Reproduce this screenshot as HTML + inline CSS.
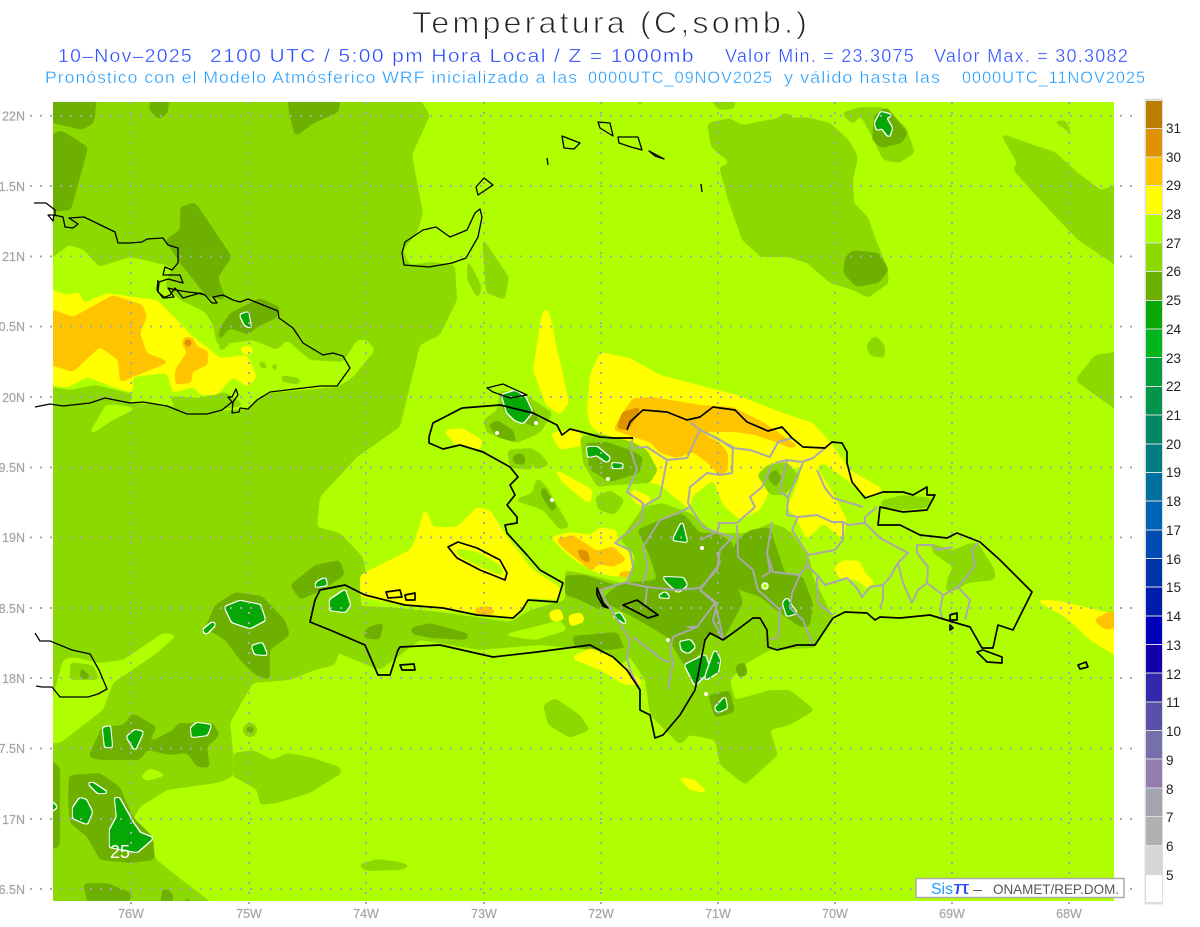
<!DOCTYPE html>
<html><head><meta charset="utf-8"><title>Temperatura</title>
<style>
html,body{margin:0;padding:0;background:#fff;width:1200px;height:927px;overflow:hidden}
svg{display:block}
text{font-family:"Liberation Sans",sans-serif;white-space:pre}
.a{fill:#8cd900}.l{fill:#b0ff00}.d{fill:#6eb000}
.y{fill:#ffff00}.o{fill:#ffc400}.r{fill:#de9200}
.a,.l,.d,.y,.o,.r{filter:url(#goo)}
.g{fill:#000;filter:url(#gw)}
.ax{fill:#a4a4a4;font-size:12.5px;stroke:#a4a4a4;stroke-width:.2}
.cb{fill:#222;font-size:13.5px}
</style></head><body>
<svg width="1200" height="927" viewBox="0 0 1200 927" xmlns="http://www.w3.org/2000/svg">
<defs>
<clipPath id="m"><rect x="53" y="102" width="1061" height="799"/></clipPath>
<filter id="goo" color-interpolation-filters="sRGB"><feGaussianBlur stdDeviation="2.5"/><feComponentTransfer><feFuncA type="linear" slope="8" intercept="-3.5"/></feComponentTransfer></filter>
<filter id="gw" x="-40%" y="-40%" width="180%" height="180%" color-interpolation-filters="sRGB">
<feGaussianBlur in="SourceAlpha" stdDeviation="1"/>
<feComponentTransfer result="s"><feFuncA type="linear" slope="6" intercept="-2.2"/></feComponentTransfer>
<feMorphology in="s" operator="dilate" radius="1" result="b"/>
<feFlood flood-color="#ffffff"/><feComposite in2="b" operator="in" result="w"/>
<feFlood flood-color="#06a806"/><feComposite in2="s" operator="in" result="g"/>
<feMerge><feMergeNode in="w"/><feMergeNode in="g"/></feMerge>
</filter>
</defs>
<rect width="1200" height="927" fill="#fff"/>
<g stroke="#fff">
<text x="412" y="33" font-size="31" fill="#222" stroke-width=".9" letter-spacing="3" textLength="398" lengthAdjust="spacingAndGlyphs">Temperatura (C,somb.)</text>
<g font-size="18" fill="#2a4cff" stroke-width=".35" letter-spacing="1.2">
<text x="58" y="62" textLength="135" lengthAdjust="spacingAndGlyphs">10–Nov–2025</text>
<text x="210" y="62" textLength="485" lengthAdjust="spacingAndGlyphs">2100 UTC / 5:00 pm Hora Local / Z = 1000mb</text>
<text x="725" y="62" textLength="190" lengthAdjust="spacingAndGlyphs">Valor Min. = 23.3075</text>
<text x="934" y="62" textLength="195" lengthAdjust="spacingAndGlyphs">Valor Max. = 30.3082</text>
</g>
<g font-size="17" fill="#1e9cff" stroke-width=".35" letter-spacing="1">
<text x="45" y="83" textLength="533" lengthAdjust="spacingAndGlyphs">Pronóstico con el Modelo Atmósferico WRF inicializado a las</text>
<text x="588" y="83" textLength="185" lengthAdjust="spacingAndGlyphs">0000UTC_09NOV2025</text>
<text x="784" y="83" textLength="157" lengthAdjust="spacingAndGlyphs">y válido hasta las</text>
<text x="962" y="83" textLength="184" lengthAdjust="spacingAndGlyphs">0000UTC_11NOV2025</text>
</g>
</g>

<g clip-path="url(#m)">
<rect x="53" y="102" width="1061" height="799" fill="#b0ff00"/>
<!-- 26 layer -->
<polygon class="a" points="40,90 414,90 430,115 412,155 423,213 417,233 403,250 410,265 430,262 455,265 457,300 440,335 420,345 400,427 357,457 320,497 317,527 340,533 363,557 367,580 360,600 370,625 340,650 335,665 315,670 290,680 253,683 230,723 233,750 233,777 217,783 167,790 140,807 133,820 157,860 173,873 228,915 40,915"/>
<polygon class="a" points="707,123 730,118 742,125 778,118 786,112 793,118 807,117 830,123 849,140 858,157 853,180 854,203 868,217 876,240 887,267 889,283 868,298 853,290 830,283 807,263 788,257 761,257 742,240 728,200 719,167 730,163 711,147"/>
<polygon class="a" points="841,113 860,107 883,107 906,127 915,153 899,163 883,160 870,133 860,115 853,125"/>
<polygon class="a" points="1000,133 1025,142 1055,152 1078,173 1101,190 1130,180 1130,275 1078,240 1052,213 1013,170 1017,163"/>
<polygon class="a" points="1052,121 1065,120 1078,143 1066,130"/>
<polygon class="a" points="1075,380 1095,355 1130,350 1130,420 1095,395"/>
<polygon class="a" points="866,345 875,335 885,345 885,358 870,356"/>
<polygon class="a" points="705,90 738,90 734,109 718,110"/>
<polygon class="a" points="627,90 653,90 640,106"/>
<polygon class="a" points="482,237 509,277 505,300 486,293"/>
<polygon class="a" points="467,257 482,287 478,300 467,280"/>
<polygon class="a" points="233,753 253,750 273,760 287,753 310,757 340,767 342,773 310,793 277,803 260,805 257,790 240,780 233,777"/>
<polygon class="a" points="357,865 377,859 400,862 412,866 400,870 367,871"/>
<polygon class="a" points="543,705 555,698 580,715 590,730 570,738 548,725"/>
<circle cx="250" cy="730" r="7" fill="#8cd900"/><circle cx="250" cy="730" r="3.5" fill="#6eb000"/>
<!-- lime patches in 26 -->
<polygon class="l" points="40,267 69,245 84,250 99,267 130,257 145,260 172,267 165,285 180,300 205,312 213,325 217,345 253,340 277,350 287,340 310,360 343,362 357,340 367,340 375,350 353,377 337,387 270,393 257,400 248,409 200,412 167,405 133,403 107,398 40,385"/>
<polygon class="l" points="87,437 107,403 137,408 113,420"/>
<polygon class="l" points="40,743 63,660 73,657 100,663 123,660 163,633 177,635 157,653 113,683 103,710 60,743"/>
<polygon class="l" points="140,777 150,768 168,775 147,781"/>
<polygon class="a" points="70,662 93,665 100,680 70,680"/>
<polygon class="d" points="80,666 92,678 80,680"/>
<!-- Cuba 26 lumps -->
<polygon class="a" points="40,385 70,390 95,385 133,394 130,404 40,408"/>
<polygon class="a" points="170,396 200,398 225,392 245,405 200,414 175,410"/>
<polygon class="a" points="258,360 265,362 268,370 260,368"/>
<polygon class="a" points="272,362 278,365 276,372 272,370"/>
<polygon class="a" points="280,375 300,378 300,385 282,382"/>
<polygon class="a" points="308,335 314,345 312,358 308,350"/>
<polygon class="a" points="275,320 290,330 300,345 280,340"/>
<polygon class="a" points="217,345 235,335 230,343 222,352"/>
<!-- Cuba yellow/orange -->
<polygon class="y" points="40,285 67,295 80,292 83,303 107,293 133,297 157,300 177,320 193,337 207,347 220,358 247,355 257,377 247,387 233,377 217,395 200,395 193,387 173,393 167,373 133,377 133,393 113,387 87,377 67,388 40,383"/>
<polygon class="o" points="40,305 73,317 113,295 143,305 147,317 140,333 147,353 170,362 133,377 120,383 118,360 100,347 73,372 40,362"/>
<polygon class="o" points="183,337 193,337 197,347 208,350 208,365 192,372 192,383 175,385 175,370 187,352 182,345"/>
<circle cx="188" cy="343" r="3.5" fill="#de9200"/>
<polygon class="y" points="241,346 251,346 254,352 247,356 241,352"/>
<!-- dark 25 west -->
<polygon class="d" points="40,90 98,90 94,123 82,130 40,120"/>
<polygon class="d" points="40,140 61,130 88,147 82,170 71,210 40,213"/>
<polygon class="d" points="151,90 170,90 168,113 159,120 149,110"/>
<polygon class="d" points="287,90 341,90 339,112 314,123 295,137 289,113"/>
<polygon class="d" points="180,207 195,202 212,227 232,257 218,277 226,300 207,297 180,263 165,240 180,230"/>
<polygon class="d" points="230,313 260,298 280,307 277,318 257,327 248,335 230,328 217,343 220,328"/>
<polygon class="d" points="205,628 215,605 235,592 262,596 285,620 290,635 270,650 270,680 255,675 240,660 225,640"/>
<polygon class="d" points="88,757 102,727 123,725 133,713 157,727 148,743 173,730 178,723 213,723 220,735 207,747 210,768 197,767 187,753 170,755 147,750 140,760 100,760"/>
<polygon class="d" points="69,775 100,773 120,787 133,817 153,837 155,860 130,863 100,860 87,837 70,823 68,800"/>
<polygon class="d" points="83,883 107,883 132,893 125,915 90,915"/>
<polygon class="d" points="158,915 163,887 173,893 173,915"/>
<polygon class="d" points="180,915 187,895 197,915"/>
<polygon class="d" points="40,753 60,767 60,847 40,852"/>
<polygon class="d" points="290,585 315,565 340,560 345,575 322,590 300,600"/>
<!-- east dark -->
<polygon class="d" points="845,257 853,250 879,253 889,270 879,283 856,287 843,273"/>
<polygon class="d" points="874,115 887,107 908,133 902,143 881,148 872,140"/>
<!-- Gulf yellow -->
<polygon class="y" points="360,575 410,550 415,540 425,507 433,527 457,527 477,507 490,510 507,537 533,570 560,587 560,600 530,598 523,610 513,618 470,612 443,610 405,605 360,597"/>
<polygon class="l" points="455,548 478,552 500,565 505,577 480,567 458,556"/>
<polygon class="o" points="473,608 490,606 497,614 478,616"/>
<!-- Peninsula 26 -->
<polygon class="a" points="310,625 345,605 400,608 440,612 510,622 530,610 565,600 565,570 590,575 630,585 640,600 640,650 620,665 590,650 540,645 480,650 420,640 380,670 330,650"/>
<polygon class="d" points="410,628 430,623 470,634 466,640 430,638 412,634"/>
<polygon class="d" points="572,636 615,632 636,646 610,650 575,648"/>
<polygon class="d" points="366,628 384,622 380,640 363,638"/>
<polygon class="d" points="565,575 585,575 615,585 630,600 600,610 580,600 565,595"/>
<polygon class="l" points="500,635 530,628 560,620 568,630 535,640"/>
<!-- Haiti yellow patches -->
<polygon class="y" points="443,430 462,428 483,440 480,450 455,445"/>
<polygon class="y" points="550,433 578,428 585,445 560,450"/>
<polygon class="y" points="547,460 557,470 593,490 590,505 580,497 563,483"/>
<polygon class="a" points="507,450 530,448 533,470 510,468"/>
<polygon class="d" points="512,455 524,453 526,465 514,464"/>
<polygon class="a" points="595,497 610,490 625,500 615,515 598,510"/>
<!-- North DR yellow -->
<polygon class="y" points="533,370 541,318 546,306 551,318 556,345 562,370 569,403 560,415 546,405"/>
<polygon class="y" points="587,410 590,375 600,352 630,358 660,375 737,395 783,413 813,423 830,442 850,470 885,490 867,497 847,480 823,463 817,467 833,493 847,520 843,540 823,523 807,540 797,520 787,507 795,490 803,465 790,470 770,490 760,510 740,520 723,505 713,480 692,497 690,510 660,485 640,480 630,470 627,448 620,440 600,435 590,425"/>
<polygon class="y" points="630,488 653,498 643,507 633,502"/>
<polygon class="o" points="613,430 623,412 633,398 653,397 700,405 733,407 763,422 800,447 790,448 775,442 755,435 735,432 700,432 720,443 728,453 728,470 720,477 710,465 693,452 677,458 660,453 650,442 633,437"/>
<polygon class="r" points="616,429 622,412 642,406 634,421 628,430"/>
<!-- Haiti north 26/25 -->
<polygon class="a" points="500,390 523,393 553,413 540,433 517,443 487,433 483,420 497,410"/>
<polygon class="d" points="488,425 497,420 513,430 517,443 497,437"/>
<polygon class="d" points="502,393 527,397 540,423 533,427 520,420 503,410"/>
<polygon class="a" points="580,437 597,433 633,442 647,450 658,470 650,483 617,485 597,487 583,463"/>
<polygon class="d" points="585,443 607,442 630,450 643,457 640,473 610,482 590,470"/>
<polygon class="a" points="537,477 547,487 560,510 570,527 560,530 543,510 513,500 532,493"/>
<polygon class="d" points="543,485 557,507 552,513 540,493"/>
<polygon class="a" points="525,445 540,453 550,465 535,470"/>
<!-- Haiti yellow orange -->
<polygon class="y" points="550,537 570,532 590,535 600,527 617,530 617,543 630,553 633,570 617,577 597,573 577,562 563,550"/>
<polygon class="o" points="555,539 573,535 597,551 613,546 627,560 613,567 597,564 593,572 580,562 565,550"/>
<polygon class="r" points="576,548 588,551 591,564 581,560"/>
<polygon class="o" points="617,573 630,570 632,577 620,578"/>
<polygon class="y" points="570,658 590,648 613,657 630,670 645,685 625,685 600,670"/>
<polygon class="y" points="568,615 582,612 585,622 570,627"/>
<!-- central DR 26/25 -->
<polygon class="a" points="643,507 663,503 690,513 715,533 747,533 770,523 783,527 792,533 810,560 813,577 833,617 815,648 770,650 747,663 730,680 735,700 770,690 790,690 815,710 790,725 770,730 778,755 745,785 720,765 715,740 690,735 680,745 650,715 645,680 625,650 600,590 630,580 635,555 620,540"/>
<polygon class="d" points="637,530 660,520 683,513 700,533 717,533 733,543 733,570 743,603 730,627 723,640 707,633 700,653 687,670 667,637 633,617 600,600 620,583 657,580 650,557"/>
<polygon class="d" points="737,540 750,530 770,527 775,543 785,573 803,577 813,603 810,627 800,627 780,613 760,597 740,590 723,570"/>
<polygon class="a" points="757,475 767,465 787,462 800,477 785,495 770,495"/>
<polygon class="d" points="767,477 775,468 782,478 775,488"/>
<polygon class="d" points="708,695 730,690 735,712 715,718"/>
<polygon class="d" points="735,665 745,662 748,675 738,678"/>
<polygon class="a" points="930,543 953,550 970,543 978,543 995,570 995,580 967,583 957,590 945,592 948,577 953,567 933,553"/>
<polygon class="y" points="833,568 843,560 860,561 865,573 875,582 867,589 857,580 840,579"/>
<polygon class="a" points="882,500 903,495 913,496 933,498 927,508 903,510 880,507"/>
<polygon class="y" points="1033,599 1060,601 1130,618 1130,665 1090,640 1065,617"/>
<polygon class="o" points="1093,620 1112,610 1130,625 1105,630"/>
<polygon class="y" points="676,776 695,780 710,794 690,790"/>
<polygon class="y" points="548,612 560,608 565,620 552,622"/>
<!-- 24 green w/ white contour -->
<polygon class="g" points="875,123 881,112 892,115 886,118 892,128 889,137 882,128 877,130"/>
<polygon class="g" points="240,315 248,312 251,328 245,325"/>
<polygon class="g" points="502,395 515,391 525,397 532,412 523,423 515,420 507,412"/>
<polygon class="g" points="587,447 597,447 610,458 607,462 597,455 588,457"/>
<polygon class="g" points="612,463 622,464 623,468 613,468"/>
<polygon class="g" points="673,540 682,522 687,542"/>
<polygon class="g" points="663,577 683,578 687,585 678,592 668,583"/>
<polygon class="g" points="658,597 665,592 670,598"/>
<polygon class="g" points="613,615 620,613 627,625"/>
<polygon class="g" points="680,642 690,640 695,647 688,653 682,650"/>
<polygon class="g" points="685,665 705,655 710,670 695,685"/>
<polygon class="g" points="707,672 715,650 720,660 718,672 705,680"/>
<polygon class="g" points="783,603 787,598 792,607 797,613 787,616"/>
<polygon class="g" points="715,708 725,697 727,708 718,712"/>
<circle cx="765" cy="586" r="3" fill="#b0ff00" stroke="#fff" stroke-width="1.5"/>
<polygon class="g" points="225,607 240,601 260,605 265,620 250,628 232,622"/>
<polygon class="g" points="203,630 213,622 215,625 206,634"/>
<polygon class="g" points="252,646 262,643 267,655 255,654"/>
<polygon class="g" points="317,582 325,578 327,585 315,587"/>
<polygon class="g" points="330,600 345,590 350,605 345,612 330,610"/>
<polygon class="g" points="103,728 110,726 112,747 105,747"/>
<polygon class="g" points="127,737 135,730 143,732 135,750"/>
<polygon class="g" points="191,728 197,723 211,725 207,735 192,737"/>
<polygon class="g" points="115,798 119,798 133,823 140,833 153,838 137,852 110,847 110,830 117,817"/>
<polygon class="g" points="80,798 86,800 92,812 87,824 73,818 73,808"/>
<polygon class="g" points="88,783 93,783 108,793 98,793" />
<polygon class="g" points="46,797 57,807 46,815"/>
<circle cx="536" cy="423" r="2" fill="#fff"/><circle cx="497" cy="433" r="2" fill="#fff"/><circle cx="608" cy="479" r="2" fill="#fff"/><circle cx="552" cy="500" r="2" fill="#fff"/><circle cx="702" cy="548" r="2" fill="#fff"/><circle cx="668" cy="640" r="2" fill="#fff"/><circle cx="706" cy="694" r="2" fill="#fff"/>
<text x="110" y="858" font-size="18" fill="#fff" textLength="20" lengthAdjust="spacing">25</text>
</g>

<!-- grid -->
<g stroke="#a8a8a8" stroke-width="2" stroke-dasharray="2 8" fill="none">
<path d="M131 102V908M249 102V908M366 102V908M484 102V908M601 102V908M718 102V908M835 102V908M952 102V908M1069 102V908"/>
<path d="M30 115.7H1135M30 186H1135M30 256.5H1135M30 326.5H1135M30 397H1135M30 467.5H1135M30 537.5H1135M30 608H1135M30 678H1135M30 748.5H1135M30 819H1135M30 889H1135"/>
</g>
<g class="ax">
<text class="ax" x="25" y="120.5" text-anchor="end">22N</text>
<text class="ax" x="25" y="191" text-anchor="end">1.5N</text>
<text class="ax" x="25" y="261" text-anchor="end">21N</text>
<text class="ax" x="25" y="331" text-anchor="end">0.5N</text>
<text class="ax" x="25" y="402" text-anchor="end">20N</text>
<text class="ax" x="25" y="472" text-anchor="end">9.5N</text>
<text class="ax" x="25" y="542" text-anchor="end">19N</text>
<text class="ax" x="25" y="613" text-anchor="end">8.5N</text>
<text class="ax" x="25" y="683" text-anchor="end">18N</text>
<text class="ax" x="25" y="753" text-anchor="end">7.5N</text>
<text class="ax" x="25" y="824" text-anchor="end">17N</text>
<text class="ax" x="25" y="894" text-anchor="end">6.5N</text>
<text class="ax" x="131" y="918" text-anchor="middle">76W</text>
<text class="ax" x="249" y="918" text-anchor="middle">75W</text>
<text class="ax" x="366" y="918" text-anchor="middle">74W</text>
<text class="ax" x="484" y="918" text-anchor="middle">73W</text>
<text class="ax" x="601" y="918" text-anchor="middle">72W</text>
<text class="ax" x="718" y="918" text-anchor="middle">71W</text>
<text class="ax" x="835" y="918" text-anchor="middle">70W</text>
<text class="ax" x="952" y="918" text-anchor="middle">69W</text>
<text class="ax" x="1069" y="918" text-anchor="middle">68W</text>
</g>

<!-- province lines -->
<g fill="none" stroke="#a9a9a9" stroke-width="2" stroke-linejoin="round">
<path d="M633 438L630 448 637 470 627 492 643 503 642 520 615 543 630 550 633 567 627 582 600 590 607 603 630 640 627 657 630 670 640 690"/>
<path d="M633 448L647 447 667 460 687 458 700 430 690 422"/>
<path d="M700 430L733 447 732 473 720 475 707 473 690 487 688 503 703 527 718 533"/>
<path d="M667 460L660 497 642 507"/>
<path d="M700 430L717 438 732 448 750 450 770 457 778 442 792 438"/>
<path d="M773 463L762 487 750 497 755 507 737 523 720 523 717 532 700 540"/>
<path d="M775 463L787 460 802 462 813 458 825 448"/>
<path d="M787 460L782 480 780 492 788 497 803 463"/>
<path d="M788 497L787 515 798 517 817 515 832 522 843 522 848 525 865 523 865 517 877 507"/>
<path d="M865 523L870 528 880 538 908 553 898 563 890 577 883 585 883 600 880 608"/>
<path d="M817 470L825 488 833 498 857 505 863 507"/>
<path d="M798 517L792 530 808 555 807 565 800 575 773 572 767 553"/>
<path d="M808 555L835 550 843 540 843 522"/>
<path d="M807 565L817 575 825 585 847 578 857 588 862 597 870 587 883 585"/>
<path d="M817 577L818 603 833 615"/>
<path d="M898 563L903 583 912 603 918 590 927 583 928 567 917 553 917 545 933 545 937 550 953 547"/>
<path d="M927 583L943 595 940 610 943 620"/>
<path d="M943 595L958 587 970 600 965 620"/>
<path d="M958 587L968 575 975 565 972 550 978 543"/>
<path d="M737 525L738 557 753 570 758 590 780 610 778 637 770 640"/>
<path d="M800 575L792 593 790 608 803 620 813 645"/>
<path d="M717 552L720 563 700 590 717 603 715 613 713 620 723 640"/>
<path d="M772 522L767 553 770 572 762 577"/>
<path d="M718 533L733 537 720 550 717 570 700 588 677 590 647 587 627 583"/>
<path d="M643 547L648 567 643 583"/>
<path d="M643 547L660 520 678 513 690 507"/>
<path d="M700 590L715 603 697 627 673 637 670 650 673 663 668 690"/>
<path d="M647 587L645 607"/>
<path d="M633 637L663 660 670 662"/>
<path d="M687 627L697 627"/>
<path d="M715 603L723 637"/>
</g>

<!-- coastlines -->
<g fill="none" stroke="#000" stroke-width="1.3" stroke-linejoin="round">
<path d="M34 203L46 203 55 210 55 215 48 215 53 221 54 215 63 217 65 227 73 228 78 224 69 218 84 217 115 232 118 243 130 243 142 242 147 239 163 238 168 245 178 248 178 263 172 270 165 267 163 275 180 275 183 283 168 279 159 282 158 292 165 298 174 297 168 288 176 290 188 292 197 293 205 295"/>
<path d="M158 280L157 290 163 298 170 295 175 288 183 298 200 293 205 295 212 303 217 303 213 297 223 295 233 300 240 302 248 299 263 305 278 311 279 318 293 328 303 343 323 355 333 353 343 356 350 368 337 386 320 386 270 392 257 400 248 409 240 408 239 412 232 413 233 402 238 395 236 389 232 397 228 397 232 402 222 410 207 414 187 414 167 406 143 402 130 403 105 398 90 403 63 406 50 404 35 407"/>
<path d="M35 633L40 641 50 641 72 650 90 654 99 670 107 689 98 694 88 697 70 697 60 697 52 687 42 687 36 686"/>
<path d="M402 253L405 242 423 230 436 227 450 237 467 230 475 213 480 209 482 217 478 237 466 258 452 263 429 267 404 265Z"/>
<path d="M476 187L484 178 493 185 478 195Z"/>
<path d="M547 158L548 165"/>
<path d="M562 136L580 143 574 149 564 148Z"/>
<path d="M598 122L610 123 613 136 600 128Z"/>
<path d="M618 137L638 137 642 150 631 147 619 143Z"/>
<path d="M649 151L664 159 655 156Z"/>
<path d="M701 184L702 192"/>
<path d="M487 388L503 384 527 395 510 398 493 392Z"/>
<g stroke-width="1.7">
<path d="M429 437L433 423 462 408 500 405 533 413 557 425 562 435 570 429 582 432 600 437 613 438 633 438"/>
<path d="M627 430L630 422 643 410 667 412 687 420 700 417 713 407 735 410 747 422 768 431 782 427 792 438 803 447 825 448 832 442 842 443 847 452 847 463 852 482 865 498 883 492 903 492 913 495 927 487 927 495 935 495 927 510 903 512 880 507 878 525 900 525 920 535 947 538 957 533 980 542 1000 560 1032 592 1017 622 1013 630 998 625 993 648 982 648 970 627 953 622 930 615 900 618 880 617 875 620 867 613 845 612 833 618 815 645 797 645 777 650 768 647 767 630 760 618 753 618 737 630 723 640 710 633 705 640 695 690 680 715 663 735 655 738 650 715 640 710 640 690 627 670 613 657 590 645 537 652 493 657 440 645 400 647 398 650 390 675 378 675 365 645 330 630 310 622 315 600 320 590 345 585 365 595 405 605 443 608 477 615 513 618 522 610 528 600 557 602 563 583 540 570 527 555 507 533 505 525 517 523 517 517 507 505 515 495 510 485 518 477 510 467 483 452 460 445 443 449 429 443 429 437"/>
<path d="M448 547L458 542 477 548 500 560 507 573 505 580 480 570 457 558Z"/>
<path d="M977 652L983 650 1002 657 1002 663 987 662Z"/>
<path d="M1078 665L1086 662 1088 667 1080 669Z"/>
<path d="M950 615L957 613 957 620 950 620Z"/>
<path d="M950 625L953 628 950 630Z"/>
<path d="M597 588L603 603 608 608 603 606 597 595Z"/>
<path d="M623 605L637 600 658 615 648 618Z"/>
<path d="M386 592L400 590 402 597 388 598Z"/>
<path d="M405 595L415 593 415 600 406 600Z"/>
<path d="M400 665L414 664 415 670 402 670Z"/>
</g>
</g>

<!-- logo -->
<rect x="916" y="878.5" width="208" height="19" fill="#fff" stroke="#aaa" stroke-width="1.5"/>
<text x="931" y="894" font-size="15.5" fill="#1e9cff" textLength="22" lengthAdjust="spacingAndGlyphs">Sis</text>
<text x="953" y="894" font-size="18" fill="#2a4cff" textLength="17" lengthAdjust="spacingAndGlyphs">π</text>
<text x="973" y="894" font-size="14" fill="#555" textLength="9" lengthAdjust="spacingAndGlyphs">–</text>
<text x="993" y="894" font-size="14" fill="#555" textLength="126" lengthAdjust="spacingAndGlyphs">ONAMET/REP.DOM.</text>

<!-- colorbar -->
<rect x="1144.5" y="98.5" width="18.5" height="806" fill="#ddd"/>
<g>
<rect x="1146" y="101" width="16" height="27" fill="#bd7e00"/>
<rect x="1146" y="129" width="16" height="27.5" fill="#de9200"/>
<rect x="1146" y="157.5" width="16" height="27.5" fill="#ffc400"/>
<rect x="1146" y="186" width="16" height="28" fill="#ffff00"/>
<rect x="1146" y="215" width="16" height="27.5" fill="#b0ff00"/>
<rect x="1146" y="243.5" width="16" height="27.5" fill="#8cd900"/>
<rect x="1146" y="272" width="16" height="28" fill="#6eb000"/>
<rect x="1146" y="301" width="16" height="27.5" fill="#06a806"/>
<rect x="1146" y="329.5" width="16" height="27.5" fill="#00b41e"/>
<rect x="1146" y="358" width="16" height="28" fill="#009e3a"/>
<rect x="1146" y="387" width="16" height="27.5" fill="#00944c"/>
<rect x="1146" y="415.5" width="16" height="28" fill="#008864"/>
<rect x="1146" y="444.5" width="16" height="27.5" fill="#007c80"/>
<rect x="1146" y="473" width="16" height="27.5" fill="#00709e"/>
<rect x="1146" y="501.5" width="16" height="28" fill="#0064b4"/>
<rect x="1146" y="530.5" width="16" height="27.5" fill="#004cb4"/>
<rect x="1146" y="559" width="16" height="27.5" fill="#0034ac"/>
<rect x="1146" y="587.5" width="16" height="28" fill="#001cac"/>
<rect x="1146" y="616.5" width="16" height="27.5" fill="#0000bc"/>
<rect x="1146" y="645" width="16" height="27.5" fill="#1000aa"/>
<rect x="1146" y="673.5" width="16" height="28" fill="#3428aa"/>
<rect x="1146" y="702.5" width="16" height="27.5" fill="#5850aa"/>
<rect x="1146" y="731" width="16" height="27.5" fill="#7470ac"/>
<rect x="1146" y="759.5" width="16" height="28" fill="#947cac"/>
<rect x="1146" y="788.5" width="16" height="27.5" fill="#a4a4ae"/>
<rect x="1146" y="817" width="16" height="28" fill="#b0b0b0"/>
<rect x="1146" y="846" width="16" height="28.5" fill="#d6d6d6"/>
<rect x="1146" y="875" width="16" height="27" fill="#fff"/>
</g>
<g class="cb">
<text class="cb" x="1166" y="133">31</text><text class="cb" x="1166" y="162">30</text><text class="cb" x="1166" y="190">29</text><text class="cb" x="1166" y="219">28</text><text class="cb" x="1166" y="248">27</text><text class="cb" x="1166" y="276">26</text><text class="cb" x="1166" y="305">25</text><text class="cb" x="1166" y="334">24</text><text class="cb" x="1166" y="363">23</text><text class="cb" x="1166" y="391">22</text><text class="cb" x="1166" y="420">21</text><text class="cb" x="1166" y="449">20</text><text class="cb" x="1166" y="477">19</text><text class="cb" x="1166" y="506">18</text><text class="cb" x="1166" y="535">17</text><text class="cb" x="1166" y="564">16</text><text class="cb" x="1166" y="592">15</text><text class="cb" x="1166" y="621">14</text><text class="cb" x="1166" y="650">13</text><text class="cb" x="1166" y="679">12</text><text class="cb" x="1166" y="707">11</text><text class="cb" x="1166" y="736">10</text><text class="cb" x="1166" y="765">9</text><text class="cb" x="1166" y="794">8</text><text class="cb" x="1166" y="822">7</text><text class="cb" x="1166" y="851">6</text><text class="cb" x="1166" y="880">5</text>
</g>
</svg>
</body></html>
